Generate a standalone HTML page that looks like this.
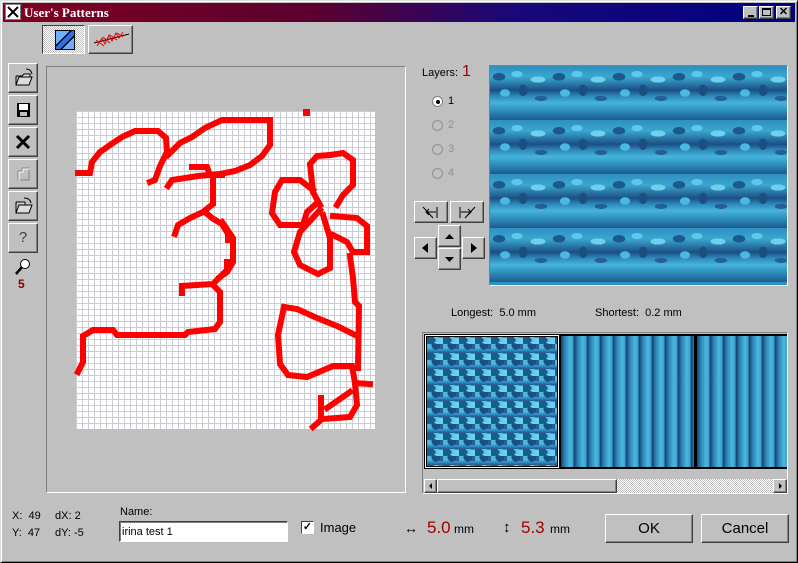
<!DOCTYPE html>
<html><head><style>
*{box-sizing:border-box;margin:0;padding:0}
body{width:798px;height:563px;background:#c0c0c0;font-family:"Liberation Sans",sans-serif;font-size:12px;position:relative;overflow:hidden}
.a{position:absolute}
.btn{position:absolute;background:#c0c0c0;border:1px solid;border-color:#fff #404040 #404040 #fff;box-shadow:inset -1px -1px 0 #808080}
.sunk{position:absolute;border:1px solid;border-color:#808080 #fff #fff #808080}
.t{position:absolute;white-space:nowrap;font-size:11px;color:#000}
.tex{background:
 radial-gradient(ellipse 10px 6px at 15% 20%,#1d5a8c 0 60%,transparent 65%),
 radial-gradient(ellipse 9px 5px at 45% 15%,#5cc8ea 0 60%,transparent 65%),
 radial-gradient(ellipse 12px 5px at 80% 25%,#6fd0ee 0 60%,transparent 65%),
 radial-gradient(ellipse 7px 9px at 55% 45%,#1a4f80 0 60%,transparent 65%),
 radial-gradient(ellipse 8px 6px at 25% 50%,#4ab8e0 0 60%,transparent 65%),
 radial-gradient(ellipse 10px 4px at 85% 60%,#245f95 0 60%,transparent 65%),
 linear-gradient(180deg,#2e8fc0 0,#3aa6cf 20%,#1b4f84 45%,#2b86b6 55%,#45b4dc 68%,#2f8fbf 82%,#1c5a8e 100%);
 background-size:60px 54px}
.stripes{background:repeating-linear-gradient(90deg,#163f70 0,#2d86b5 4px,#4cb8df 9px,#36a0cb 12px,#1d5585 13px)}
</style></head><body>
<div class="a" style="left:0;top:0;width:798px;height:563px;border:1px solid;border-color:#dfdfdf #000 #000 #dfdfdf;box-shadow:inset 1px 1px 0 #fff,inset -1px -1px 0 #808080"></div>
<div class="a" style="left:3px;top:3px;width:792px;height:19px;background:linear-gradient(90deg,#800020,#5a0030 40%,#18087a 65%,#000080)"></div>
<div class="a" style="left:5px;top:4px;width:16px;height:16px;background:#fff;border:1px solid #808080"><svg width="14" height="14"><path d="M2 2L12 12M12 2L2 12" stroke="#000" stroke-width="2"/></svg></div>
<div class="t" style="left:24px;top:5px;color:#fff;font-weight:bold;font-family:'Liberation Serif',serif;font-size:13px">User's Patterns</div>
<div class="btn" style="left:743px;top:6px;width:15px;height:13px"><div class="a" style="left:4px;top:8px;width:6px;height:2px;background:#000"></div></div>
<div class="btn" style="left:759px;top:6px;width:15px;height:13px"><div class="a" style="left:2px;top:1px;width:9px;height:8px;border:1px solid #000;border-top-width:2px"></div></div>
<div class="btn" style="left:776px;top:6px;width:15px;height:13px;font-size:11px;font-weight:bold;text-align:center;line-height:11px">✕</div>

<div class="a" style="left:42px;top:25px;width:43px;height:29px;border:1px solid;border-color:#404040 #fff #fff #404040;background:repeating-conic-gradient(#c0c0c0 0 25%,#fff 0 50%) 0 0/2px 2px"></div>
<div class="a" style="left:55px;top:30px;width:20px;height:20px;border:1px solid #000;background:linear-gradient(135deg,#6ab0ff 0 38%,#000 38% 44%,#2f6fe0 44% 62%,#000 62% 68%,#6ab0ff 68%)"></div>
<div class="btn" style="left:88px;top:25px;width:45px;height:29px"><svg class="a" style="left:2px;top:2px" width="40" height="22"><path d="M3 15L38 6" stroke="#000"/><path d="M6 18l5-8 3 6 4-9 3 6 4-8 3 5 4-6M5 12l8 6M12 9l7 6M19 7l7 5M26 5l6 4" stroke="#e00" fill="none"/></svg></div>

<div class="btn" style="left:8px;top:63px;width:30px;height:30px"><svg width="28" height="28"><path d="M7 12h6l2-2h6v3M7 12v9h13l3-8H10l-3 8" fill="#ddd" stroke="#000"/><path d="M17 5q5 0 6 5" stroke="#000" fill="none"/></svg></div>
<div class="btn" style="left:8px;top:95px;width:30px;height:30px"><svg width="28" height="28"><rect x="8" y="7" width="13" height="14" fill="#000"/><rect x="10" y="8" width="9" height="6" fill="#fff"/><rect x="11" y="16" width="7" height="4" fill="#c0c0c0"/></svg></div>
<div class="btn" style="left:8px;top:127px;width:30px;height:30px"><svg width="28" height="28"><path d="M8 8L20 20M20 8L8 20" stroke="#000" stroke-width="3"/></svg></div>
<div class="btn" style="left:8px;top:159px;width:30px;height:30px"><svg width="28" height="28"><path d="M9 20V11h4V8h7v12z" fill="none" stroke="#808080"/><path d="M10 21V12h4V9h7" fill="none" stroke="#fff"/></svg></div>
<div class="btn" style="left:8px;top:191px;width:30px;height:30px"><svg width="28" height="28"><path d="M7 10h9v3M7 10v11h13l3-8H10l-3 8" fill="#ddd" stroke="#000"/><path d="M15 6q6 0 7 5" stroke="#000" fill="none"/></svg></div>
<div class="btn" style="left:8px;top:223px;width:30px;height:30px;text-align:center;line-height:28px;font-size:15px;color:#404040">?</div>
<svg class="a" style="left:12px;top:257px" width="22" height="20"><circle cx="13" cy="7" r="4.5" fill="#fff" stroke="#000"/><path d="M10 10L4 17" stroke="#000" stroke-width="2.5"/></svg>
<div class="t" style="left:18px;top:277px;color:#800000;font-weight:bold;font-size:12px">5</div>

<div class="sunk" style="left:46px;top:66px;width:360px;height:427px"></div>
<div class="a" style="left:76px;top:111px;width:299px;height:318px;background-color:#fff;background-image:linear-gradient(90deg,#ccccd4 1px,transparent 1px),linear-gradient(#ccccd4 1px,transparent 1px);background-size:6px 6px"></div>
<svg class="a" style="left:0;top:0" width="420" height="440">
<g fill="none" stroke="#ff0000" stroke-width="6" stroke-linejoin="miter" stroke-linecap="square">
<polyline points="78,173 90,173 92,162 100,152 113,143 122,137 135,131 158,131 166,138 167,152 160,166 155,180 150,182"/>
<polyline points="168,155 180,143 192,137 205,128 222,120 270,120 270,145 262,156 250,165 235,171 220,174 198,176 172,180 168,186"/>
<polyline points="192,167 207,167 210,175 222,175"/>
<polyline points="213,176 213,204 203,212 190,218 178,225 175,234"/>
<polyline points="205,212 212,218 222,224 228,234 228,240"/>
<polyline points="222,222 233,238 233,262 227,272 220,277"/>
<polyline points="227,262 227,270 219,278 213,284 182,286 182,293"/>
<polyline points="215,287 220,292 220,322 215,329 188,332 185,335 117,335 113,330 93,330 83,336 83,362 78,372"/>
<rect x="306" y="112" width="1" height="1"/>
<polyline points="330,155 343,153 353,160 353,185 343,195 337,205"/>
<polyline points="330,155 317,156 310,164 313,192 320,205"/>
<polyline points="313,190 300,180 282,180 275,192 272,213 280,225 303,225 307,212 317,203"/>
<polyline points="320,210 300,232 294,252 300,265 318,274 330,268 330,238 323,215"/>
<polyline points="333,216 357,218 367,226 367,252 353,252 347,242 333,235"/>
<polyline points="350,256 353,278 355,302 359,306 358,368"/>
<polyline points="284,307 297,309 317,318 337,326 357,336"/>
<polyline points="284,307 278,335 280,364 288,375 307,377 333,366 352,366 355,383 370,384"/>
<polyline points="355,383 357,405 350,417 322,419 313,427"/>
<polyline points="321,398 321,417"/>
<polyline points="327,408 350,392"/>
</g></svg>

<div class="t" style="left:422px;top:67px">Layers:</div>
<div class="t" style="left:462px;top:63px;color:#a00000;font-size:16px">1</div>
<div class="a" style="left:432px;top:96px;width:11px;height:11px;border-radius:50%;background:#fff;border:1px solid #808080"><div class="a" style="left:3px;top:3px;width:4px;height:4px;border-radius:50%;background:#000"></div></div>
<div class="t" style="left:448px;top:95px">1</div>
<div class="a" style="left:432px;top:120px;width:11px;height:11px;border-radius:50%;border:1px solid #909090"></div><div class="t" style="left:448px;top:119px;color:#909090">2</div>
<div class="a" style="left:432px;top:144px;width:11px;height:11px;border-radius:50%;border:1px solid #909090"></div><div class="t" style="left:448px;top:143px;color:#909090">3</div>
<div class="a" style="left:432px;top:168px;width:11px;height:11px;border-radius:50%;border:1px solid #909090"></div><div class="t" style="left:448px;top:167px;color:#909090">4</div>

<div class="btn" style="left:414px;top:201px;width:34px;height:22px"><svg width="32" height="20"><path d="M8 5l10 11M11 10h10M14 7l-3 3 3 3M22 5v11" stroke="#000" fill="none"/></svg></div>
<div class="btn" style="left:450px;top:201px;width:34px;height:22px"><svg width="32" height="20"><path d="M9 5v11M10 10h10M17 7l3 3-3 3M24 5L14 16" stroke="#000" fill="none"/></svg></div>
<div class="btn" style="left:438px;top:225px;width:23px;height:22px"><svg width="21" height="20"><path d="M6 13h9l-4.5-5z"/></svg></div>
<div class="btn" style="left:414px;top:237px;width:23px;height:22px"><svg width="21" height="20"><path d="M13 5v10l-6-5z"/></svg></div>
<div class="btn" style="left:462px;top:237px;width:23px;height:22px"><svg width="21" height="20"><path d="M8 5v10l6-5z"/></svg></div>
<div class="btn" style="left:438px;top:248px;width:23px;height:22px"><svg width="21" height="20"><path d="M6 8h9l-4.5 5z"/></svg></div>

<div class="a" style="left:489px;top:65px;width:299px;height:221px;border:1px solid;border-color:#808080 #fff #fff #808080"></div>
<div class="a tex" style="left:490px;top:66px;width:297px;height:219px"></div>

<div class="t" style="left:451px;top:307px">Longest:&nbsp; 5.0 mm</div>
<div class="t" style="left:595px;top:307px">Shortest:&nbsp; 0.2 mm</div>

<div class="a" style="left:422px;top:332px;width:366px;height:162px;border:1px solid;border-color:#808080 #fff #fff #808080;background:#c0c0c0"></div>
<div class="a" style="left:424px;top:334px;width:363px;height:135px;background:#000"></div>
<div class="a" style="left:425px;top:335px;width:134px;height:133px;border:1px solid #fff"></div>
<div class="a tex" style="left:427px;top:337px;width:130px;height:129px;background-size:16px 16px"></div>
<div class="a stripes" style="left:561px;top:336px;width:133px;height:131px"></div>
<div class="a stripes" style="left:697px;top:336px;width:90px;height:131px"></div>
<div class="a" style="left:424px;top:479px;width:363px;height:14px;background:repeating-conic-gradient(#c0c0c0 0 25%,#fff 0 50%) 0 0/2px 2px"></div>
<div class="btn" style="left:424px;top:479px;width:13px;height:14px"><svg width="11" height="12"><path d="M7 3v6l-3-3z"/></svg></div>
<div class="btn" style="left:437px;top:479px;width:180px;height:14px"></div>
<div class="btn" style="left:773px;top:479px;width:14px;height:14px"><svg width="12" height="12"><path d="M5 3v6l3-3z"/></svg></div>

<div class="t" style="left:12px;top:510px">X:&nbsp; 49</div>
<div class="t" style="left:12px;top:527px">Y:&nbsp; 47</div>
<div class="t" style="left:55px;top:510px">dX:&nbsp;2</div>
<div class="t" style="left:55px;top:527px">dY:&nbsp;-5</div>
<div class="t" style="left:120px;top:506px">Name:</div>
<div class="a" style="left:119px;top:521px;width:169px;height:21px;background:#fff;border:1px solid;border-color:#404040 #fff #fff #404040;box-shadow:inset 1px 1px 0 #808080"><span class="t" style="left:2px;top:4px">irina test 1</span></div>
<div class="a" style="left:301px;top:521px;width:13px;height:13px;background:#fff;border:1px solid;border-color:#404040 #fff #fff #404040;font-size:11px;line-height:10px;text-align:center;font-weight:bold">✓</div>
<div class="t" style="left:320px;top:520px;font-size:13px">Image</div>
<div class="t" style="left:404px;top:520px;font-size:14px">↔</div>
<div class="t" style="left:427px;top:518px;color:#a00000;font-size:17px">5.0</div>
<div class="t" style="left:454px;top:522px;font-size:12px">mm</div>
<div class="t" style="left:503px;top:519px;font-size:15px">↕</div>
<div class="t" style="left:521px;top:518px;color:#a00000;font-size:17px">5.3</div>
<div class="t" style="left:550px;top:522px;font-size:12px">mm</div>
<div class="btn" style="left:605px;top:514px;width:88px;height:29px;text-align:center;line-height:27px;font-size:15px">OK</div>
<div class="btn" style="left:701px;top:514px;width:88px;height:29px;text-align:center;line-height:27px;font-size:15px">Cancel</div>
</body></html>
